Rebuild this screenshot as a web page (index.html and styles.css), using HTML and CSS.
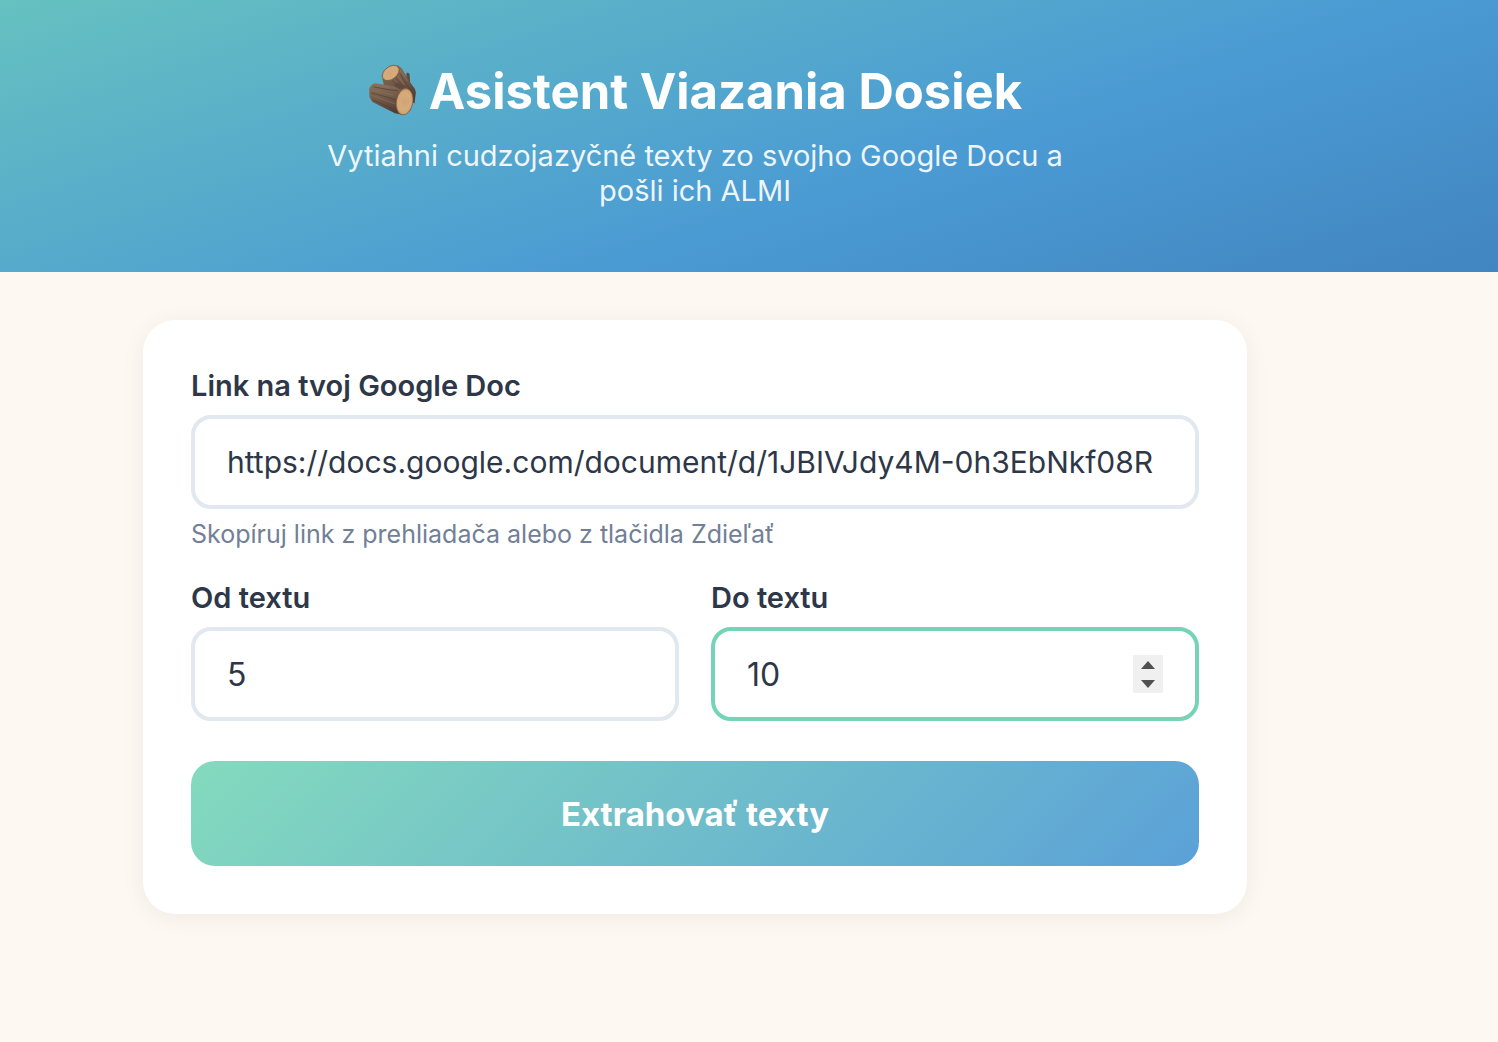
FILE: index.html
```html
<!DOCTYPE html>
<html lang="sk">
<head>
    <meta charset="UTF-8">
    <meta name="viewport" content="width=device-width, initial-scale=1.0">
    <title>Asistent Viazania Dosiek</title>
    <link rel="stylesheet" href="styles.css">
</head>
<body>
    <!-- Header -->
    <header class="hero">
        <h1>
            <svg class="logo" viewBox="33 25 147 157" aria-hidden="true">
                <defs>
                    <linearGradient id="bark" x1="0" y1="0" x2="0.3" y2="1">
                        <stop offset="0" stop-color="#8f725d"/>
                        <stop offset="0.5" stop-color="#745b4a"/>
                        <stop offset="1" stop-color="#503d33"/>
                    </linearGradient>
                    <radialGradient id="wood">
                        <stop offset="0" stop-color="#d3a574"/>
                        <stop offset="0.7" stop-color="#d8ae7e"/>
                        <stop offset="1" stop-color="#c99a69"/>
                    </radialGradient>
                </defs>
                <!-- back log -->
                <path d="M148 54l5-3 5 4 2 30 14 18-10 4-12-18z" fill="#604a3d"/>
                <path d="M76 71L122 28l12 10 24 40 16 22 3 10-4 34-14-8-30-20-42-4z" fill="url(#bark)"/>
                <path d="M130 54l19 33 20 27M116 66l22 26M106 74l12 14" fill="none" stroke="#544034" stroke-width="2"/>
                <path d="M130 43l22 34M122 60l20 28" fill="none" stroke="#9a7d65" stroke-width="2"/>
                <ellipse cx="101" cy="52" rx="29" ry="19" transform="rotate(-38 101 52)" fill="url(#wood)" stroke="#6e523f" stroke-width="2"/>
                <ellipse cx="101" cy="51" rx="17" ry="10" transform="rotate(-38 101 51)" fill="none" stroke="#cfa273" stroke-width="1"/>
                <!-- front log -->
                <path d="M36 100c3-10 10-16 19-17l57 9 37 5 18 22-6 45-21 15-26-5-68-34-9-15z" fill="url(#bark)"/>
                <path d="M48 94l45 8 30 4M42 112l38 10 38 12M45 132l39 18 35 16" fill="none" stroke="#4f3c32" stroke-width="2"/>
                <path d="M57 88l41 9M47 104l29 7 33 8M50 122l35 13 28 10" fill="none" stroke="#8f735d" stroke-width="2"/>
                <path d="M112 92c1-7 6-10 12-9 10 2 17 5 23 13l-17 6z" fill="#604a3c"/>
                <ellipse cx="143" cy="139" rx="25" ry="40" transform="rotate(10 143 139)" fill="url(#wood)" stroke="#765740" stroke-width="2"/>
                <g fill="none" stroke="#c99a6d" stroke-width="1">
                    <ellipse cx="144" cy="139" rx="17" ry="28" transform="rotate(10 144 139)"/>
                    <ellipse cx="144" cy="138" rx="11" ry="19" transform="rotate(10 144 138)"/>
                    <ellipse cx="145" cy="138" rx="5" ry="9" transform="rotate(10 145 138)"/>
                </g>
            </svg>
            Asistent Viazania Dosiek
        </h1>
        <p>Vytiahni cudzojazyčné texty zo svojho Google Docu a pošli ich ALMI</p>
    </header>

    <!-- Extraction form -->
    <main>
        <form class="card">
            <div class="field">
                <label for="doc-url">Link na tvoj Google Doc</label>
                <input type="text" id="doc-url" value="https://docs.google.com/document/d/1JBIVJdy4M-0h3EbNkf08R">
                <p class="hint">Skopíruj link z prehliadača alebo z tlačidla Zdieľať</p>
            </div>
            <div class="row">
                <div class="field">
                    <label for="from-text">Od textu</label>
                    <input type="number" id="from-text" value="5" min="1">
                </div>
                <div class="field">
                    <label for="to-text">Do textu</label>
                    <input type="number" id="to-text" class="active" value="10" min="1">
                </div>
            </div>
            <button type="submit">Extrahovať texty</button>
        </form>
    </main>
</body>
</html>
```

FILE: styles.css
```css
* {
    box-sizing: border-box;
    margin: 0;
    padding: 0;
}

body {
    font-family: Inter, "Liberation Sans", sans-serif;
    background-color: #fdf8f2;
    color: #2d3748;
}

.hero {
    padding: 64px 108px 64px 0;
    background: linear-gradient(162deg, #66c1c0 0%, #4a9ad4 62%, #4285c0 100%);
    color: #fff;
    text-align: center;
}

.hero h1 {
    display: flex;
    justify-content: center;
    align-items: center;
    gap: 12px;
    margin-bottom: 18px;
    font-size: 49px;
    font-weight: 700;
    line-height: 56px;
}

.logo {
    width: 49px;
    height: 52px;
    margin-bottom: 4px;
}

.hero p {
    max-width: 800px;
    margin: 0 auto;
    font-size: 29px;
    line-height: 35px;
    opacity: 0.9;
}

main {
    padding: 48px 108px 48px 0;
}

.card {
    max-width: 1104px;
    margin: 0 auto;
    padding: 48px;
    background-color: #fff;
    border-radius: 32px;
    box-shadow: 0 4px 24px rgba(0, 0, 0, 0.06);
}

.field label {
    display: block;
    margin-bottom: 12px;
    font-size: 29px;
    font-weight: 600;
    line-height: 35px;
}

.field input {
    display: block;
    width: 100%;
    height: 94px;
    padding: 24px 32px;
    border: 4px solid #e2e8f0;
    border-radius: 20px;
    outline: none;
    background-color: #fff;
    color: #2d3748;
    font-family: inherit;
    font-size: 30px;
}

.field input[type="number"] {
    font-size: 32px;
}

.field input:focus,
.field input.active {
    border-color: #76d4b6;
}

/* Stepper shows only on the active field */
.field input::-webkit-inner-spin-button {
    -webkit-appearance: none;
    width: 30px;
    height: 38px;
    background: #f0f0f0 url("data:image/svg+xml,%3Csvg xmlns='http://www.w3.org/2000/svg' viewBox='0 0 30 38'%3E%3Cpath d='M8 14l7-8 7 8zM8 25l7 8 7-8z' fill='%23505050'/%3E%3C/svg%3E") no-repeat center;
    opacity: 0;
}

.field input:focus::-webkit-inner-spin-button,
.field input.active::-webkit-inner-spin-button {
    opacity: 1;
}

.hint {
    margin-top: 8px;
    color: #718096;
    font-size: 25px;
    line-height: 35px;
}

.row {
    display: grid;
    grid-template-columns: 1fr 1fr;
    gap: 32px;
    margin-top: 28px;
}

button {
    width: 100%;
    height: 105px;
    margin-top: 40px;
    border: none;
    border-radius: 24px;
    background: linear-gradient(135deg, #84dabd, #5ba1d8);
    color: #fff;
    font-family: inherit;
    font-size: 33px;
    font-weight: 700;
    cursor: pointer;
}
```
